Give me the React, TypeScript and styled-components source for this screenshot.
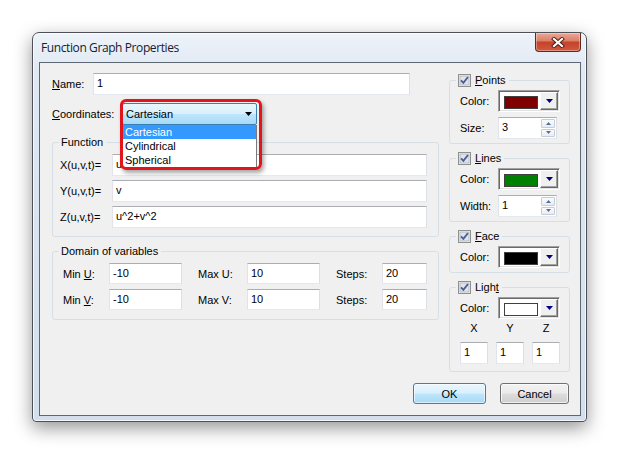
import React from 'react'
import styled, { createGlobalStyle } from 'styled-components'

const GlobalStyle = createGlobalStyle`
  html, body {
    margin: 0;
    padding: 0;
    background: #ffffff;
  }
  body {
    font-family: "Liberation Sans", Arial, sans-serif;
    font-size: 11px;
    color: #000;
  }
  * {
    box-sizing: border-box;
  }
`

const Desktop = styled.div`
  width: 620px;
  height: 456px;
  padding: 32px 0 0 32px;
  background: #fff;
`

const Window = styled.div`
  width: 555px;
  height: 390px;
  display: flex;
  flex-direction: column;
  padding: 0 5px 5px 6px;
  border: 1px solid #4d5157;
  border-radius: 7px 7px 4px 4px;
  background: linear-gradient(to bottom, #eef3f9 0%, #dfe8f3 10%, #d3dfed 100%);
  box-shadow: 0 6px 18px rgba(0, 0, 0, 0.42), inset 0 0 0 1px rgba(255, 255, 255, 0.75);
`

const TitleBar = styled.div`
  height: 29px;
  flex: none;
  display: flex;
  align-items: center;
  justify-content: space-between;
`

const Title = styled.div`
  padding-left: 2px;
  font-family: "Open Sans", "Noto Sans", sans-serif;
  font-size: 12px;
  letter-spacing: -0.4px;
  color: #16202c;
`

const CloseButton = styled.div`
  align-self: flex-start;
  width: 46px;
  height: 19px;
  display: flex;
  align-items: center;
  justify-content: center;
  border: 1px solid #5f2a1f;
  border-top: none;
  border-radius: 0 0 4px 4px;
  background: linear-gradient(to bottom, #eaa898 0%, #dc8069 42%, #c5432b 52%, #cf5a3e 100%);
  box-shadow: inset 0 0 0 1px rgba(255, 255, 255, 0.35);
`

const Client = styled.div`
  flex: 1;
  display: flex;
  flex-direction: column;
  border: 1px solid #5d6873;
  background: #f0f0f0;
  padding: 10px 9px 11px 12px;
`

const Body = styled.div`
  display: grid;
  grid-template-columns: 387px 121px;
  column-gap: 10px;
  align-items: start;
`

const LeftCol = styled.div`
  display: flex;
  flex-direction: column;
`

const RightCol = styled.div`
  display: flex;
  flex-direction: column;
  gap: 7px;
`

const Row = styled.div<{ $mt?: number }>`
  display: flex;
  align-items: center;
  height: 22px;
  margin-top: ${(p) => p.$mt ?? 0}px;
`

const FieldLabel = styled.span<{ $w: number }>`
  flex: none;
  width: ${(p) => p.$w}px;
  white-space: nowrap;
`

const TextBox = styled.div<{ $w?: number; $h?: number }>`
  flex: ${(p) => (p.$w ? 'none' : '1')};
  width: ${(p) => (p.$w ? `${p.$w}px` : 'auto')};
  height: ${(p) => p.$h ?? 22}px;
  padding: 3px 0 0 3px;
  line-height: 13px;
  white-space: pre;
  background: #fff;
  border: 1px solid;
  border-color: #abadb3 #dbdfe6 #e3e9ef #e2e3ea;
`

const ComboWrap = styled.div`
  position: relative;
  width: 135px;
  height: 22px;
`

const ComboBox = styled.div`
  height: 22px;
  display: flex;
  align-items: center;
  justify-content: space-between;
  padding: 0 4px 0 3px;
  border: 1px solid #3c7fb1;
  border-radius: 2px;
  background: linear-gradient(to bottom, #eaf6fd 0%, #d9f0fc 48%, #bee6fd 52%, #a7d9f5 100%);
`

const DropList = styled.div`
  position: absolute;
  z-index: 2;
  top: 22px;
  left: 0;
  width: 135px;
  border: 1px solid #7a7a7a;
  border-top: none;
  background: #fff;
`

const ListItem = styled.div<{ $selected?: boolean }>`
  height: 14px;
  line-height: 14px;
  padding-left: 2px;
  background: ${(p) => (p.$selected ? '#3399ff' : '#fff')};
  color: ${(p) => (p.$selected ? '#fff' : '#000')};
`

const Highlight = styled.div`
  position: absolute;
  z-index: 3;
  top: -4px;
  left: -2px;
  width: 142px;
  height: 71px;
  border: 3px solid #e2141c;
  border-radius: 6px;
  box-shadow: 2px 3px 4px rgba(0, 0, 0, 0.35);
  pointer-events: none;
`

const Group = styled.fieldset<{ $pad: string; $mt?: number }>`
  margin: ${(p) => p.$mt ?? 0}px 0 0 0;
  min-width: 0;
  padding: ${(p) => p.$pad};
  border: 1px solid #d5dfe5;
  border-radius: 3px;
`

const Legend = styled.legend<{ $ml: number }>`
  display: flex;
  align-items: center;
  gap: 4px;
  height: 14px;
  line-height: 14px;
  margin-left: ${(p) => p.$ml}px;
  padding: 0 3px 0 2px;
`

const FuncRows = styled.div`
  display: flex;
  flex-direction: column;
  gap: 4px;
`

const DomainGrid = styled.div`
  display: grid;
  grid-template-columns: 46px 73px 65px 73px 62px 45px;
  row-gap: 5px;
  align-items: center;
`

const GridLabel = styled.span<{ $indent?: boolean }>`
  padding-left: ${(p) => (p.$indent ? 16 : 0)}px;
`

const GroupRows = styled.div`
  display: flex;
  flex-direction: column;
  gap: 5px;
`

const ColorBox = styled.div`
  width: 62px;
  height: 22px;
  display: flex;
  align-items: center;
  justify-content: space-between;
  border: 1px solid;
  border-color: #a0a0a0 #ffffff #ffffff #a0a0a0;
  box-shadow: inset 1px 1px 0 #696969, inset -1px -1px 0 #e3e3e3;
  background: #fff;
  padding: 1px;
`

const Swatch = styled.div<{ $color: string }>`
  width: 34px;
  height: 13px;
  margin: 2px 0 0 4px;
  border: 1px solid #404040;
  background: ${(p) => p.$color};
`

const DropButton = styled.div`
  width: 18px;
  height: 18px;
  display: flex;
  align-items: center;
  justify-content: center;
  background: #f0f0f0;
  border: 1px solid;
  border-color: #ffffff #696969 #696969 #ffffff;
  box-shadow: inset -1px -1px 0 #a0a0a0;
`

const SpinBox = styled.div`
  width: 59px;
  height: 22px;
  display: flex;
  justify-content: space-between;
  padding: 1px 1px 1px 3px;
  background: #fff;
  border: 1px solid;
  border-color: #abadb3 #dbdfe6 #e3e9ef #e2e3ea;
`

const SpinText = styled.span`
  padding-top: 2px;
  line-height: 13px;
`

const SpinButtons = styled.div`
  width: 14px;
  display: flex;
  flex-direction: column;
  gap: 1px;
`

const SpinButton = styled.div`
  flex: 1;
  display: flex;
  align-items: center;
  justify-content: center;
  border: 1px solid #c6cdd7;
  border-radius: 1px;
  background: linear-gradient(to bottom, #fbfbfb, #e9ecf0);
`

const AxisGrid = styled.div`
  display: grid;
  grid-template-columns: repeat(3, 28px);
  column-gap: 8px;
  row-gap: 7px;
  margin-top: 3px;
`

const AxisLabel = styled.span`
  text-align: center;
  line-height: 13px;
`

const ButtonRow = styled.div`
  margin-top: auto;
  display: flex;
  justify-content: flex-end;
  gap: 14px;
  padding-right: 2px;
`

const Button = styled.div<{ $primary?: boolean; $w: number }>`
  width: ${(p) => p.$w}px;
  height: 21px;
  display: flex;
  align-items: center;
  justify-content: center;
  border: 1px solid ${(p) => (p.$primary ? '#3c7fb1' : '#707070')};
  border-radius: 3px;
  background: ${(p) =>
    p.$primary
      ? 'linear-gradient(to bottom, #eaf6fd 0%, #d9f0fc 48%, #bee6fd 52%, #a7d9f5 100%)'
      : 'linear-gradient(to bottom, #f2f2f2 0%, #ebebeb 48%, #dddddd 52%, #cfcfcf 100%)'};
  box-shadow: inset 0 0 0 1px ${(p) => (p.$primary ? 'rgba(255,255,255,0.6)' : 'rgba(255,255,255,0.7)')};
`

function CloseGlyph() {
  return (
    <svg width="14" height="11" viewBox="0 0 14 11">
      <path d="M3 2 L11 9 M11 2 L3 9" stroke="#4a1c12" strokeWidth="4" strokeLinecap="square" />
      <path d="M3 2 L11 9 M11 2 L3 9" stroke="#ffffff" strokeWidth="2.2" strokeLinecap="square" />
    </svg>
  )
}

function Arrow({ color }: { color: string }) {
  return (
    <svg width="7" height="4" viewBox="0 0 7 4">
      <path d="M0 0 H7 L3.5 4 Z" fill={color} />
    </svg>
  )
}

function SpinArrow({ up }: { up?: boolean }) {
  return (
    <svg width="5" height="3" viewBox="0 0 5 3">
      <path d={up ? 'M0 3 H5 L2.5 0 Z' : 'M0 0 H5 L2.5 3 Z'} fill="#4d6fa3" />
    </svg>
  )
}

function CheckBox() {
  return (
    <svg width="13" height="13" viewBox="0 0 13 13">
      <rect x="0.5" y="0.5" width="12" height="12" fill="#f4f4f4" stroke="#8e8f8f" />
      <rect x="2" y="2" width="9" height="9" fill="#dfe3ea" stroke="#aeb3b9" strokeWidth="0.8" />
      <path d="M3 6.3 L5.4 8.8 L10 3" fill="none" stroke="#4a5f97" strokeWidth="1.9" />
    </svg>
  )
}

function ColorCombo({ color }: { color: string }) {
  return (
    <ColorBox>
      <Swatch $color={color} />
      <DropButton>
        <Arrow color="#000080" />
      </DropButton>
    </ColorBox>
  )
}

function Spin({ value }: { value: string }) {
  return (
    <SpinBox>
      <SpinText>{value}</SpinText>
      <SpinButtons>
        <SpinButton>
          <SpinArrow up />
        </SpinButton>
        <SpinButton>
          <SpinArrow />
        </SpinButton>
      </SpinButtons>
    </SpinBox>
  )
}

function CheckLegend({ children }: { children: React.ReactNode }) {
  return (
    <Legend $ml={-4}>
      <CheckBox />
      <span>{children}</span>
    </Legend>
  )
}

export default function App() {
  return (
    <>
      <GlobalStyle />
      <Desktop>
        <Window>
          <TitleBar>
            <Title>Function Graph Properties</Title>
            <CloseButton>
              <CloseGlyph />
            </CloseButton>
          </TitleBar>
          <Client>
            <Body>
              <LeftCol>
                <Row>
                  <FieldLabel $w={41}>
                    <u>N</u>ame:
                  </FieldLabel>
                  <TextBox $w={317}>1</TextBox>
                </Row>
                <Row $mt={8}>
                  <FieldLabel $w={70}>
                    <u>C</u>oordinates:
                  </FieldLabel>
                  <ComboWrap>
                    <ComboBox>
                      <span>Cartesian</span>
                      <Arrow color="#000" />
                    </ComboBox>
                    <DropList>
                      <ListItem $selected>Cartesian</ListItem>
                      <ListItem>Cylindrical</ListItem>
                      <ListItem>Spherical</ListItem>
                    </DropList>
                    <Highlight />
                  </ComboWrap>
                </Row>
                <Group $pad="5px 11px 8px 7px" $mt={10}>
                  <Legend $ml={-1}>Function</Legend>
                  <FuncRows>
                    <Row>
                      <FieldLabel $w={52}>X(u,v,t)=</FieldLabel>
                      <TextBox>u</TextBox>
                    </Row>
                    <Row>
                      <FieldLabel $w={52}>Y(u,v,t)=</FieldLabel>
                      <TextBox>v</TextBox>
                    </Row>
                    <Row>
                      <FieldLabel $w={52}>Z(u,v,t)=</FieldLabel>
                      <TextBox>u^2+v^2</TextBox>
                    </Row>
                  </FuncRows>
                </Group>
                <Group $pad="5px 11px 9px 10px" $mt={7}>
                  <Legend $ml={-4}>Domain of variables</Legend>
                  <DomainGrid>
                    <GridLabel>
                      Min <u>U</u>:
                    </GridLabel>
                    <TextBox $h={21}>-10</TextBox>
                    <GridLabel $indent>Max U:</GridLabel>
                    <TextBox $h={21}>10</TextBox>
                    <GridLabel $indent>Steps:</GridLabel>
                    <TextBox $h={21}>20</TextBox>
                    <GridLabel>
                      Min <u>V</u>:
                    </GridLabel>
                    <TextBox $h={21}>-10</TextBox>
                    <GridLabel $indent>Max V:</GridLabel>
                    <TextBox $h={21}>10</TextBox>
                    <GridLabel $indent>Steps:</GridLabel>
                    <TextBox $h={21}>20</TextBox>
                  </DomainGrid>
                </Group>
              </LeftCol>

              <RightCol>
                <Group $pad="3px 9px 4px 10px">
                  <CheckLegend>
                    <u>P</u>oints
                  </CheckLegend>
                  <GroupRows>
                    <Row>
                      <FieldLabel $w={38}>Color:</FieldLabel>
                      <ColorCombo color="#800000" />
                    </Row>
                    <Row>
                      <FieldLabel $w={38}>Size:</FieldLabel>
                      <Spin value="3" />
                    </Row>
                  </GroupRows>
                </Group>
                <Group $pad="3px 9px 4px 10px">
                  <CheckLegend>
                    <u>L</u>ines
                  </CheckLegend>
                  <GroupRows>
                    <Row>
                      <FieldLabel $w={38}>Color:</FieldLabel>
                      <ColorCombo color="#008000" />
                    </Row>
                    <Row>
                      <FieldLabel $w={38}>Width:</FieldLabel>
                      <Spin value="1" />
                    </Row>
                  </GroupRows>
                </Group>
                <Group $pad="3px 9px 4px 10px">
                  <CheckLegend>
                    <u>F</u>ace
                  </CheckLegend>
                  <Row>
                    <FieldLabel $w={38}>Color:</FieldLabel>
                    <ColorCombo color="#000000" />
                  </Row>
                </Group>
                <Group $pad="3px 9px 7px 10px">
                  <CheckLegend>
                    Ligh<u>t</u>
                  </CheckLegend>
                  <Row>
                    <FieldLabel $w={38}>Color:</FieldLabel>
                    <ColorCombo color="#ffffff" />
                  </Row>
                  <AxisGrid>
                    <AxisLabel>X</AxisLabel>
                    <AxisLabel>Y</AxisLabel>
                    <AxisLabel>Z</AxisLabel>
                    <TextBox>1</TextBox>
                    <TextBox>1</TextBox>
                    <TextBox>1</TextBox>
                  </AxisGrid>
                </Group>
              </RightCol>
            </Body>
            <ButtonRow>
              <Button $primary $w={73}>
                OK
              </Button>
              <Button $w={69}>Cancel</Button>
            </ButtonRow>
          </Client>
        </Window>
      </Desktop>
    </>
  )
}
